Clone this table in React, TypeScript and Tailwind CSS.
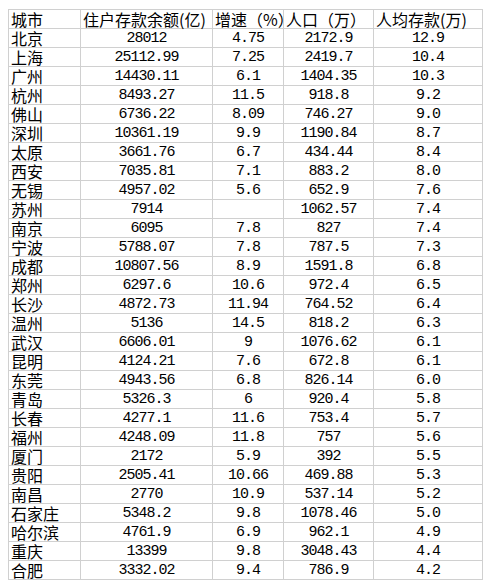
import React from "react";

const rows: [string, string, string, string, string][] = [
  ["北京", "28012", "4.75", "2172.9", "12.9"],
  ["上海", "25112.99", "7.25", "2419.7", "10.4"],
  ["广州", "14430.11", "6.1", "1404.35", "10.3"],
  ["杭州", "8493.27", "11.5", "918.8", "9.2"],
  ["佛山", "6736.22", "8.09", "746.27", "9.0"],
  ["深圳", "10361.19", "9.9", "1190.84", "8.7"],
  ["太原", "3661.76", "6.7", "434.44", "8.4"],
  ["西安", "7035.81", "7.1", "883.2", "8.0"],
  ["无锡", "4957.02", "5.6", "652.9", "7.6"],
  ["苏州", "7914", "", "1062.57", "7.4"],
  ["南京", "6095", "7.8", "827", "7.4"],
  ["宁波", "5788.07", "7.8", "787.5", "7.3"],
  ["成都", "10807.56", "8.9", "1591.8", "6.8"],
  ["郑州", "6297.6", "10.6", "972.4", "6.5"],
  ["长沙", "4872.73", "11.94", "764.52", "6.4"],
  ["温州", "5136", "14.5", "818.2", "6.3"],
  ["武汉", "6606.01", "9", "1076.62", "6.1"],
  ["昆明", "4124.21", "7.6", "672.8", "6.1"],
  ["东莞", "4943.56", "6.8", "826.14", "6.0"],
  ["青岛", "5326.3", "6", "920.4", "5.8"],
  ["长春", "4277.1", "11.6", "753.4", "5.7"],
  ["福州", "4248.09", "11.8", "757", "5.6"],
  ["厦门", "2172", "5.9", "392", "5.5"],
  ["贵阳", "2505.41", "10.66", "469.88", "5.3"],
  ["南昌", "2770", "10.9", "537.14", "5.2"],
  ["石家庄", "5348.2", "9.8", "1078.46", "5.0"],
  ["哈尔滨", "4761.9", "6.9", "962.1", "4.9"],
  ["重庆", "13399", "9.8", "3048.43", "4.4"],
  ["合肥", "3332.02", "9.4", "786.9", "4.2"],
];

const cjk = "font-['Noto_Sans_CJK_SC',sans-serif]";
const num = "font-['Liberation_Mono','Noto_Sans_CJK_SC',monospace] text-[15px] tracking-[-1px]";
const cell = "h-[19px] border-r border-b border-[#d0d0d0] leading-[19px] whitespace-nowrap";

export default function App() {
  const headers = ["城市", "住户存款余额(亿)", "增速（%）", "人口（万）", "人均存款(万)"];
  return (
    <div className="w-[491px] h-[587px] bg-white text-black pt-[9px] pl-[8px]">
      <div className="grid grid-cols-[72px_132px_71px_90px_109px] w-max border-t border-l border-[#d0d0d0]">
        {headers.map((h, i) => (
          <div key={i} className={`${cell} ${cjk} text-[16px] pl-[2px]`}>
            {h}
          </div>
        ))}
        {rows.map((r, ri) => (
          <React.Fragment key={ri}>
            <div className={`${cell} ${cjk} text-[16px] pl-[2px]`}>{r[0]}</div>
            {r.slice(1).map((v, ci) => (
              <div key={ci} className={`${cell} ${num} text-center`}>
                {v}
              </div>
            ))}
          </React.Fragment>
        ))}
      </div>
    </div>
  );
}
